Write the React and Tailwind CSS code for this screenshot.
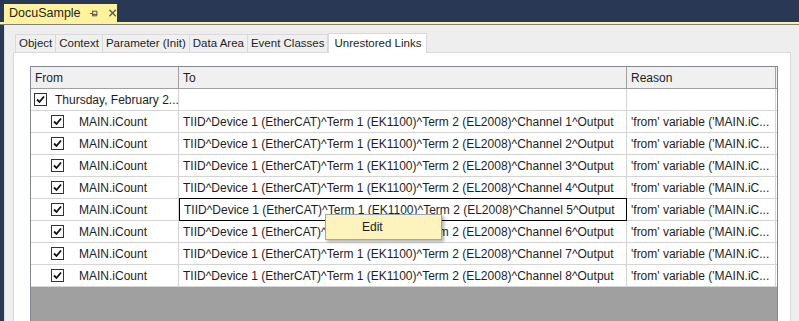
import React from 'react';

const font = { fontFamily: '"Liberation Sans", Arial, sans-serif' };

function Check() {
  return (
    <span className="w-[13px] h-[13px] border border-[#333] bg-white flex items-center justify-center shrink-0">
      <svg width="9" height="9" viewBox="0 0 9 9">
        <path d="M1 4.5 L3.5 7 L8 1.5" fill="none" stroke="#111" strokeWidth="1.8" />
      </svg>
    </span>
  );
}

function Tab({ label, active }) {
  if (active) {
    return (
      <div className="h-[20px] px-[5px] bg-white border border-b-0 border-[#d9d9d9] flex items-center text-[11.5px] text-[#1e1e1e] -mb-px relative z-10">
        {label}
      </div>
    );
  }
  return (
    <div className="h-[18px] px-[3px] bg-[#f0f0f0] border border-b-0 border-[#d9d9d9] -ml-px first:ml-0 flex items-center text-[11.5px] text-[#1e1e1e]">
      {label}
    </div>
  );
}

function Row({ n, focused }) {
  return (
    <div className="flex h-[22px] border-b border-[#d4d4d4] text-[12px] text-[#1e1e1e]">
      <div className="w-[148px] shrink-0 flex items-center pl-[20px] gap-[15px] border-r border-[#d4d4d4]">
        <Check />
        <span>MAIN.iCount</span>
      </div>
      <div
        className={`w-[448px] shrink-0 flex items-center pl-[4px] border-r ${
          focused ? 'border border-black -my-px h-[23px]' : 'border-[#d4d4d4]'
        }`}
      >
        TIID^Device 1 (EtherCAT)^Term 1 (EK1100)^Term 2 (EL2008)^Channel {n}^Output
      </div>
      <div className="w-[149px] shrink-0 flex items-center pl-[4px] border-r border-[#d4d4d4] whitespace-nowrap overflow-hidden">
        'from' variable ('MAIN.iC...
      </div>
    </div>
  );
}

export default function App() {
  return (
    <div className="w-[799px] h-[321px] bg-[#293955] flex flex-col overflow-hidden relative" style={font}>
      {/* document tab bar */}
      <div className="h-[22px] shrink-0 pl-[4px] pt-[4px] flex">
        <div className="w-[113px] h-[18px] bg-[#fff29d] flex items-center pl-[5px] text-[12.5px] text-[#1e1e1e]">
          <span className="w-[72px]">DocuSample</span>
          <svg className="ml-[8px]" width="11" height="11" viewBox="0 0 11 11">
            <path d="M1 5.5 H4 M4 2.5 V8.5 M4 3 H8.5 V8 H4 M4 6.5 H8.5" fill="none" stroke="#444" strokeWidth="1" />
          </svg>
          <svg className="ml-[9px]" width="10" height="10" viewBox="0 0 10 10">
            <path d="M1.5 1.5 L8.5 8.5 M8.5 1.5 L1.5 8.5" stroke="#555" strokeWidth="1.3" />
          </svg>
        </div>
      </div>

      <div className="flex-1 flex flex-col pl-[4px]">
        <div className="h-[2px] bg-[#fff29d] shrink-0 -ml-[4px]" />
        <div className="h-[1px] bg-[#828282] shrink-0 -ml-[4px]" />

        {/* tool window body */}
        <div className="flex-1 bg-[#eeeeef] border-l border-[#dcdcdc] pt-[8px] pl-[8px] flex flex-col">
          <div className="flex items-end pl-[2px]">
            <Tab label="Object" />
            <Tab label="Context" />
            <Tab label="Parameter (Init)" />
            <Tab label="Data Area" />
            <Tab label="Event Classes" />
            <Tab label="Unrestored Links" active />
          </div>

          {/* tab page */}
          <div className="w-[778px] flex-1 bg-white border border-b-0 border-[#d9d9d9] pt-[13px] pl-[16px]">
            <div className="w-[748px] h-full border-l border-t border-r border-[#828790] bg-[#a0a0a0] flex flex-col">
              {/* header */}
              <div className="flex h-[22px] bg-[#f0f0f0] border-b border-[#a0a0a0] text-[12px] text-[#1e1e1e]">
                <div className="w-[148px] shrink-0 flex items-center pl-[4px] border-r border-[#a0a0a0]">From</div>
                <div className="w-[448px] shrink-0 flex items-center pl-[4px] border-r border-[#a0a0a0]">To</div>
                <div className="w-[149px] shrink-0 flex items-center pl-[4px] border-r border-[#a0a0a0]">Reason</div>
              </div>
              <div className="bg-white">
                {/* group row */}
                <div className="flex h-[22px] border-b border-[#d4d4d4] text-[12px] text-[#1e1e1e]">
                  <div className="w-[148px] shrink-0 flex items-center pl-[3px] gap-[8px] border-r border-[#d4d4d4] whitespace-nowrap">
                    <Check />
                    <span>Thursday, February 2...</span>
                  </div>
                  <div className="w-[448px] shrink-0 border-r border-[#d4d4d4]" />
                  <div className="w-[149px] shrink-0 border-r border-[#d4d4d4]" />
                </div>
                {[1, 2, 3, 4, 5, 6, 7, 8].map((n) => (
                  <Row key={n} n={n} focused={n === 5} />
                ))}
              </div>
            </div>
          </div>
        </div>
      </div>

      {/* context menu */}
      <div className="absolute left-[325px] top-[214px] w-[117px] h-[26px] bg-[#fcf3bd] border border-[#9ba7b7] shadow-[2px_2px_3px_rgba(0,0,0,0.3)] flex items-center pl-[36px] text-[12px] text-[#1e1e1e]">
        Edit
      </div>
    </div>
  );
}
